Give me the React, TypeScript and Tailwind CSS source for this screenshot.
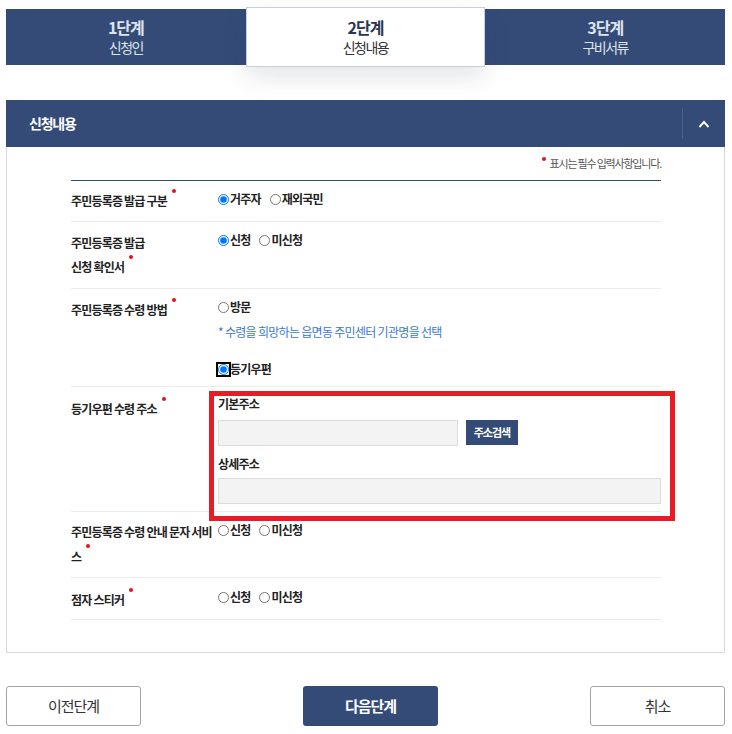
import React from 'react';

interface RadioOption {
  label: string;
  checked?: boolean;
  focused?: boolean;
}

const RequiredDot: React.FC = () => (
  <span className="ml-[5px] inline-block h-[4px] w-[4px] rounded-full bg-[#e8101b] align-top" />
);

const RadioGroup: React.FC<{ name: string; options: RadioOption[] }> = ({ name, options }) => (
  <div className="flex h-[20px] items-center gap-[9px]">
    {options.map((opt) => (
      <label key={opt.label} className="flex items-center gap-[1px] text-[12px] font-bold tracking-[-0.8px] text-[#222]">
        <input
          type="radio"
          name={name}
          defaultChecked={opt.checked}
          className={
            opt.focused
              ? 'h-[11px] w-[11px] rounded-full outline-2 outline-offset-0 outline-black'
              : 'h-[11px] w-[11px]'
          }
        />
        <span>{opt.label}</span>
      </label>
    ))}
  </div>
);

const Step: React.FC<{ step: string; title: string }> = ({ step, title }) => (
  <div className="flex flex-col items-center justify-center text-[#dfe3eb]">
    <span className="text-[16px] leading-[20px] font-bold tracking-[-1px]">{step}</span>
    <span className="text-[14px] leading-[20px] tracking-[-1.5px]">{title}</span>
  </div>
);

const App: React.FC = () => {
  return (
    <div className="min-h-[734px] w-full bg-white pt-[9px] pr-[7px] pl-[6px] font-['Noto_Sans_CJK_KR','Noto_Sans',sans-serif]">
      {/* steps */}
      <div className="grid h-[56px] grid-cols-3 bg-[#344b78]">
        <Step step="1단계" title="신청인" />
        <div className="relative z-10 -my-[2px] flex flex-col items-center justify-center border border-[#c8cedb] bg-white shadow-[0_10px_24px_rgba(30,45,80,0.12)]">
          <span className="text-[16px] leading-[20px] font-bold tracking-[-1px] text-[#2a3754]">2단계</span>
          <span className="text-[14px] leading-[20px] tracking-[-1.5px] text-[#333]">신청내용</span>
        </div>
        <Step step="3단계" title="구비서류" />
      </div>

      {/* section header */}
      <div className="mt-[35px] flex h-[47px] items-stretch bg-[#344b78]">
        <h2 className="flex flex-1 items-center pl-[23px] text-[14px] font-bold tracking-[-1.25px] text-white">신청내용</h2>
        <button className="my-[8px] flex w-[43px] items-center justify-center border-l border-[#4a5e86]">
          <svg width="12" height="8" viewBox="0 0 12 8" fill="none">
            <polyline points="1.5,7 6,2 10.5,7" stroke="white" strokeWidth="2" />
          </svg>
        </button>
      </div>

      {/* panel */}
      <div className="border border-t-0 border-[#d8d8d8] pr-[63px] pb-[32px] pl-[64px]">
        <p className="flex justify-end pt-[8px] pb-[9px] text-[11px] leading-[16px] tracking-[-1.2px] text-[#555]">
          <span className="mt-[2px] mr-[4px] inline-block h-[4px] w-[4px] rounded-full bg-[#e8101b]" />
          표시는 필수 입력사항입니다.
        </p>

        <div className="border-t border-[#344b78] text-[12px] font-bold tracking-[-0.8px] text-[#222]">
          {/* row 1 */}
          <div className="grid grid-cols-[147px_1fr] border-b border-[#ebebeb] pb-[8px]">
            <div className="pt-[8px] leading-[24px]">
              주민등록증 발급 구분<RequiredDot />
            </div>
            <div className="pt-[8px]">
              <RadioGroup
                name="type"
                options={[{ label: '거주자', checked: true }, { label: '재외국민' }]}
              />
            </div>
          </div>

          {/* row 2 */}
          <div className="grid grid-cols-[147px_1fr] border-b border-[#ebebeb] pb-[9px]">
            <div className="pt-[9px] leading-[24px]">
              주민등록증 발급
              <br />
              신청 확인서<RequiredDot />
            </div>
            <div className="pt-[8px]">
              <RadioGroup
                name="confirm"
                options={[{ label: '신청', checked: true }, { label: '미신청' }]}
              />
            </div>
          </div>

          {/* row 3 */}
          <div className="grid grid-cols-[147px_1fr] border-b border-[#ebebeb] pb-[7px]">
            <div className="pt-[9px] leading-[24px]">
              주민등록증 수령 방법<RequiredDot />
            </div>
            <div className="pt-[8px]">
              <RadioGroup name="receive" options={[{ label: '방문' }]} />
              <p className="mt-[5px] text-[12px] leading-[20px] font-normal tracking-[-0.7px] text-[#3a78d4]">
                * 수령을 희망하는 읍면동 주민센터 기관명을 선택
              </p>
              <div className="mt-[17px]">
                <RadioGroup name="receive" options={[{ label: '등기우편', checked: true, focused: true }]} />
              </div>
            </div>
          </div>

          {/* row 4 */}
          <div className="relative grid grid-cols-[147px_1fr] border-b border-[#ebebeb] pb-[7px]">
            <div className="pt-[10px] leading-[24px]">
              등기우편 수령 주소<RequiredDot />
            </div>
            <div className="pt-[7px]">
              <p className="leading-[20px]">기본주소</p>
              <div className="mt-[6px] flex items-start gap-[8px]">
                <input className="h-[26px] w-[240px] border border-[#dcdcdc] bg-[#f3f3f3]" />
                <button className="h-[25px] w-[52px] bg-[#344b78] text-[11px] font-bold tracking-[-1px] text-white">
                  주소검색
                </button>
              </div>
              <p className="mt-[8px] leading-[20px]">상세주소</p>
              <input className="mt-[4px] block h-[26px] w-full border border-[#dcdcdc] bg-[#f3f3f3]" />
            </div>
            <div className="pointer-events-none absolute top-[4px] left-[138px] h-[130px] w-[466px] border-[5px] border-[#e71d25]" />
          </div>

          {/* row 5 */}
          <div className="grid grid-cols-[147px_1fr] border-b border-[#ebebeb] pb-[8px]">
            <div className="pt-[7px] leading-[25px]">
              주민등록증 수령 안내 문자 서비
              <br />
              스<RequiredDot />
            </div>
            <div className="pt-[8px]">
              <RadioGroup name="sms" options={[{ label: '신청' }, { label: '미신청' }]} />
            </div>
          </div>

          {/* row 6 */}
          <div className="grid grid-cols-[147px_1fr] border-b border-[#ebebeb] pb-[7px]">
            <div className="pt-[10px] leading-[24px]">
              점자 스티커<RequiredDot />
            </div>
            <div className="pt-[9px]">
              <RadioGroup name="braille" options={[{ label: '신청' }, { label: '미신청' }]} />
            </div>
          </div>
        </div>
      </div>

      {/* buttons */}
      <div className="mt-[33px] flex">
        <button className="h-[40px] w-[135px] rounded-[3px] border border-[#a3a3a3] bg-white text-[15px] tracking-[-1px] text-[#333]">
          이전단계
        </button>
        <button className="ml-[162px] h-[40px] w-[135px] rounded-[3px] bg-[#344b78] text-[15px] font-bold tracking-[-1px] text-white">
          다음단계
        </button>
        <button className="ml-auto h-[40px] w-[135px] rounded-[3px] border border-[#a3a3a3] bg-white text-[15px] tracking-[-1px] text-[#333]">
          취소
        </button>
      </div>
    </div>
  );
};

export default App;
